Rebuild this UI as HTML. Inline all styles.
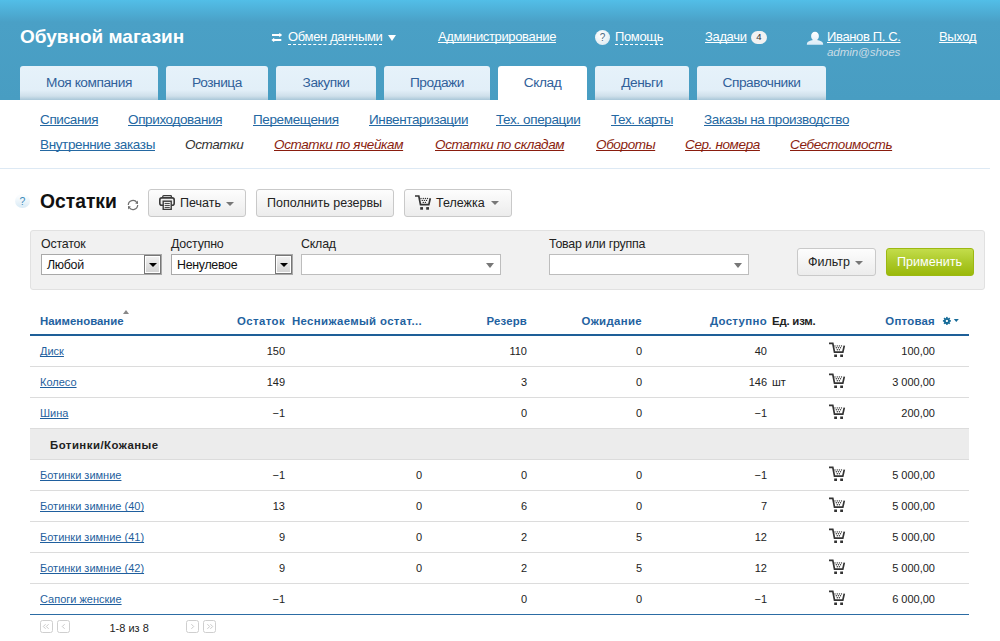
<!DOCTYPE html>
<html><head><meta charset="utf-8">
<style>
*{margin:0;padding:0;box-sizing:border-box}
*{text-decoration-skip-ink:none}
html,body{width:1000px;height:641px;overflow:hidden;background:#fff;font-family:"Liberation Sans",sans-serif;color:#222}
.abs{position:absolute;white-space:nowrap}
#hdr{position:absolute;left:0;top:0;width:1000px;height:100px;background:linear-gradient(#52bee7 0px,#4aa0c6 22px,#489dc2 100px)}
.logo{left:20px;top:26px;font-size:19px;font-weight:bold;color:#fff;line-height:22px}
.hl{color:#fff;font-size:13px;letter-spacing:-0.35px;line-height:16px;text-decoration:underline}
.dash{color:#fff;font-size:13px;letter-spacing:-0.35px;line-height:15px;border-bottom:1px dashed #fff}
.tab{position:absolute;top:66px;height:34px;border-radius:3px 3px 0 0;background:linear-gradient(#e6f2fa 0,#e2eff8 24px,#cfe0eb 30px,#a9c7d9 34px);color:#30609a;font-size:13.7px;letter-spacing:-0.45px;line-height:34px;text-align:center;padding-top:0}
.tab.act{background:#fff}
.sub{font-size:13.5px;letter-spacing:-0.37px;line-height:16px;color:#2468a2;text-decoration:underline}
.subi{font-size:13.5px;letter-spacing:-0.37px;line-height:16px;color:#8a1d0e;text-decoration:underline;font-style:italic}
.btn{position:absolute;height:28px;border:1px solid #c9c9c9;border-radius:3px;background:linear-gradient(#fdfdfd,#ececec);font-size:12.5px;color:#222;line-height:25px}
.caret{display:inline-block;width:0;height:0;border-left:4px solid transparent;border-right:4px solid transparent;border-top:4px solid #777;vertical-align:middle}
.lbl{font-size:12.4px;letter-spacing:-0.2px;color:#222;line-height:14px}
.sel{position:absolute;top:254px;height:21px;border:1px solid #a9a9a9;background:#fff;font-size:12.4px;letter-spacing:-0.3px;line-height:19px;padding-left:5px;padding-top:1px;color:#111}
.th{position:absolute;top:315px;font-size:11.4px;font-weight:bold;color:#1f62a0;line-height:13px;white-space:nowrap}
.td{position:absolute;font-size:11px;color:#222;line-height:13px;white-space:nowrap}
.lnk{color:#1f5f9e;text-decoration:underline}
.rowb{position:absolute;left:30px;width:939px;height:1px;background:#dcdcdc}
</style></head><body>
<div id="hdr"></div>
<div class="abs logo">Обувной магазин</div>

<!-- exchange icon -->
<svg class="abs" style="left:271px;top:32px" width="12" height="10" viewBox="0 0 12 10"><path d="M1 3H9M2.5 8H10.3" stroke="#fff" stroke-width="2"/><path d="M8.3 0.8L11.2 3 8.3 5.2zM3.2 5.8L0.4 8 3.2 10.2z" fill="#fff"/></svg>
<div class="abs dash" style="left:288px;top:29px;line-height:15px">Обмен данными</div>
<div class="abs" style="left:388px;top:35px;width:0;height:0;border-left:4.5px solid transparent;border-right:4.5px solid transparent;border-top:6px solid #fff"></div>
<div class="abs hl" style="left:438px;top:29px">Администрирование</div>
<div class="abs" style="left:595px;top:30px;width:15px;height:15px;border-radius:50%;background:radial-gradient(circle at 40% 35%,#fff,#d8e6ee);color:#4d6b82;font-size:10px;line-height:15px;text-align:center">?</div>
<div class="abs dash" style="left:615px;top:29px;line-height:15px">Помощь</div>
<div class="abs hl" style="left:705px;top:29px">Задачи</div>
<div class="abs" style="left:751px;top:31px;width:16px;height:13px;border-radius:7px;background:#f2f2f2;color:#333;font-size:9.5px;line-height:12px;text-align:center">4</div>
<svg class="abs" style="left:806px;top:31px" width="18" height="15" viewBox="0 0 18 15"><defs><linearGradient id="ug" x1="0" y1="0" x2="0" y2="1"><stop offset="0" stop-color="#ffffff"/><stop offset="1" stop-color="#d9ebf7"/></linearGradient></defs><path d="M9 0.7C11.2 0.7 12.9 2.4 12.9 5C12.9 7 12 8.4 10.9 9C14 9.4 16.6 10.6 17 12.3L17.2 13.8H0.8L1 12.3C1.4 10.6 4 9.4 7.1 9C6 8.4 5.1 7 5.1 5C5.1 2.4 6.8 0.7 9 0.7z" fill="url(#ug)"/></svg>
<div class="abs hl" style="left:827px;top:29px">Иванов П. С.</div>
<div class="abs" style="left:827px;top:45px;font-size:11.6px;letter-spacing:-0.1px;font-style:italic;color:#c9dce6;line-height:14px">admin@shoes</div>
<div class="abs hl" style="left:939px;top:29px">Выход</div>

<!-- tabs -->
<div class="tab" style="left:20px;width:138px">Моя компания</div>
<div class="tab" style="left:166px;width:102px">Розница</div>
<div class="tab" style="left:276px;width:100px">Закупки</div>
<div class="tab" style="left:384px;width:106px">Продажи</div>
<div class="tab act" style="left:498px;width:89px">Склад</div>
<div class="tab" style="left:595px;width:94px">Деньги</div>
<div class="tab" style="left:697px;width:129px">Справочники</div>

<!-- subnav -->
<div class="abs sub" style="left:40px;top:112px">Списания</div>
<div class="abs sub" style="left:128px;top:112px">Оприходования</div>
<div class="abs sub" style="left:253px;top:112px">Перемещения</div>
<div class="abs sub" style="left:369px;top:112px">Инвентаризации</div>
<div class="abs sub" style="left:496px;top:112px">Тех. операции</div>
<div class="abs sub" style="left:611px;top:112px">Тех. карты</div>
<div class="abs sub" style="left:704px;top:112px">Заказы на производство</div>
<div class="abs sub" style="left:40px;top:137px">Внутренние заказы</div>
<div class="abs subi" style="left:185px;top:137px;color:#333;text-decoration:none">Остатки</div>
<div class="abs subi" style="left:274px;top:137px">Остатки по ячейкам</div>
<div class="abs subi" style="left:435px;top:137px">Остатки по складам</div>
<div class="abs subi" style="left:596px;top:137px">Обороты</div>
<div class="abs subi" style="left:685px;top:137px">Сер. номера</div>
<div class="abs subi" style="left:790px;top:137px">Себестоимость</div>
<div class="abs" style="left:0;top:168px;width:990px;height:1px;background:#dde9f4"></div>

<!-- title -->
<div class="abs" style="left:15px;top:194px;width:15px;height:14px;border-radius:50%;background:linear-gradient(#f9fcfe 20%,#d8eaf5);color:#3d8bbb;font-size:10.5px;line-height:14px;text-align:center">?</div>
<div class="abs" style="left:40px;top:190px;font-size:19.3px;font-weight:bold;color:#111;line-height:24px">Остатки</div>
<svg class="abs" style="left:127px;top:199px" width="12" height="12" viewBox="0 0 12 12"><path d="M1.3 6A4.7 4.7 0 0 1 9.9 3.6" stroke="#707070" stroke-width="1.2" fill="none"/><path d="M8.2 4.4L11 5 11 1.6z" fill="#707070"/><path d="M10.7 6A4.7 4.7 0 0 1 2.1 8.4" stroke="#707070" stroke-width="1.2" fill="none"/><path d="M3.8 7.6L1 7 1 10.4z" fill="#707070"/></svg>

<div class="btn" style="left:148px;top:189px;width:98px"></div>
<svg class="abs" style="left:159px;top:195px" width="16" height="15" viewBox="0 0 16 15"><rect x="3.8" y="0.7" width="8.6" height="2.2" rx="0.8" fill="#f4f4f4" stroke="#3a3a3a" stroke-width="1.3"/><rect x="0.8" y="2.9" width="14.4" height="7.4" rx="2" fill="#eee" stroke="#3a3a3a" stroke-width="1.6"/><rect x="4.2" y="6.2" width="8" height="8.2" fill="#fff" stroke="#3a3a3a" stroke-width="1.4"/><path d="M5.6 8.4h5.2M5.6 10.4h5.2M5.6 12.4h5.2" stroke="#3a3a3a" stroke-width="1"/></svg>
<div class="abs" style="left:180px;top:196px;font-size:12.5px;line-height:15px;color:#222">Печать</div>
<div class="abs caret" style="left:226px;top:202px"></div>
<div class="btn" style="left:256px;top:189px;width:138px"></div>
<div class="abs" style="left:267px;top:196px;font-size:12.5px;line-height:15px;color:#222">Пополнить резервы</div>
<div class="btn" style="left:404px;top:189px;width:108px"></div>
<svg class="abs" style="left:414px;top:194px" width="18" height="16" viewBox="0 0 18 16"><path d="M1 2H4.8L6.5 10.7H14.8L16.3 4.2" stroke="#333" stroke-width="1.7" fill="none"/><g fill="#333"><circle cx="7" cy="4.5" r="0.7"/><circle cx="9.3" cy="4.5" r="0.7"/><circle cx="11.4" cy="4.5" r="0.7"/><circle cx="13.5" cy="4.5" r="0.7"/><circle cx="8.3" cy="6.4" r="0.7"/><circle cx="10.4" cy="6.4" r="0.7"/><circle cx="12.5" cy="6.4" r="0.7"/><circle cx="9.3" cy="8.4" r="0.7"/><circle cx="11.4" cy="8.4" r="0.7"/><rect x="6.2" y="13.1" width="2.8" height="2.6"/><rect x="12.2" y="13.1" width="2.8" height="2.6"/></g></svg>
<div class="abs" style="left:436px;top:196px;font-size:12.5px;line-height:15px;color:#222">Тележка</div>
<div class="abs caret" style="left:491px;top:201px"></div>

<!-- filter panel -->
<div class="abs" style="left:30px;top:230px;width:955px;height:60px;border:1px solid #e1e1e1;border-radius:3px;background:#f1f1f1"></div>
<div class="abs lbl" style="left:41px;top:237px">Остаток</div>
<div class="abs lbl" style="left:171px;top:237px">Доступно</div>
<div class="abs lbl" style="left:301px;top:237px">Склад</div>
<div class="abs lbl" style="left:549px;top:237px">Товар или группа</div>
<div class="sel" style="left:41px;width:121px">Любой<div style="position:absolute;right:0;top:0;width:17px;height:19px;border:1px solid #777;box-shadow:inset 0 0 0 1px #fff;background:linear-gradient(#f2f2f2,#d2d2d2)"><div style="position:absolute;left:3.5px;top:7px;border-left:4px solid transparent;border-right:4px solid transparent;border-top:4.5px solid #000"></div></div></div>
<div class="sel" style="left:171px;width:122px">Ненулевое<div style="position:absolute;right:0;top:0;width:17px;height:19px;border:1px solid #777;box-shadow:inset 0 0 0 1px #fff;background:linear-gradient(#f2f2f2,#d2d2d2)"><div style="position:absolute;left:3.5px;top:7px;border-left:4px solid transparent;border-right:4px solid transparent;border-top:4.5px solid #000"></div></div></div>
<div class="sel" style="left:301px;width:200px;border-color:#bdbdbd"><div style="position:absolute;right:6px;top:8px;border-left:4.5px solid transparent;border-right:4.5px solid transparent;border-top:5px solid #777"></div></div>
<div class="sel" style="left:549px;width:200px;border-color:#bdbdbd"><div style="position:absolute;right:6px;top:8px;border-left:4.5px solid transparent;border-right:4.5px solid transparent;border-top:5px solid #777"></div></div>
<div class="btn" style="left:797px;top:248px;width:79px;height:28px;line-height:26px"></div>
<div class="abs" style="left:808px;top:255px;font-size:12.5px;line-height:14px;color:#222">Фильтр</div>
<div class="abs caret" style="left:855px;top:261px"></div>
<div class="abs" style="left:886px;top:248px;width:88px;height:28px;border:1px solid #9cb812;border-radius:3px;background:linear-gradient(#c3dd4a,#acc92a 50%,#9bb90a)"></div>
<div class="abs" style="left:897px;top:255px;font-size:12.6px;line-height:14px;color:#fff">Применить</div>

<div class="th" style="left:40px">Наименование</div>
<div class="abs" style="left:123px;top:310px;border-left:3px solid transparent;border-right:3px solid transparent;border-bottom:4px solid #888"></div>
<div class="th" style="right:715px;letter-spacing:0.41px">Остаток</div>
<div class="th" style="right:578px;letter-spacing:0.36px">Неснижаемый остат...</div>
<div class="th" style="right:473px;letter-spacing:0.17px">Резерв</div>
<div class="th" style="right:358px;letter-spacing:0.35px">Ожидание</div>
<div class="th" style="right:233px;letter-spacing:0.35px">Доступно</div>
<div class="th" style="left:772px;color:#222;letter-spacing:-0.2px">Ед. изм.</div>
<div class="th" style="right:65px;letter-spacing:0.25px">Оптовая</div>
<svg class="abs" style="left:942px;top:316px" width="18" height="10" viewBox="0 0 18 10"><g fill="#166b98"><path fill-rule="evenodd" d="M4.9 1.9A3 3 0 1 1 4.89 1.9zM4.9 3.8A1.1 1.1 0 1 0 4.91 3.8z"/><rect x="4.1" y="0.9" width="1.6" height="2" transform="rotate(0 4.9 4.9)"/><rect x="4.1" y="0.9" width="1.6" height="2" transform="rotate(45 4.9 4.9)"/><rect x="4.1" y="0.9" width="1.6" height="2" transform="rotate(90 4.9 4.9)"/><rect x="4.1" y="0.9" width="1.6" height="2" transform="rotate(135 4.9 4.9)"/><rect x="4.1" y="0.9" width="1.6" height="2" transform="rotate(180 4.9 4.9)"/><rect x="4.1" y="0.9" width="1.6" height="2" transform="rotate(225 4.9 4.9)"/><rect x="4.1" y="0.9" width="1.6" height="2" transform="rotate(270 4.9 4.9)"/><rect x="4.1" y="0.9" width="1.6" height="2" transform="rotate(315 4.9 4.9)"/><path d="M11.8 3h5l-2.5 3z"/></g></svg>
<div class="abs" style="left:30px;top:334px;width:939px;height:2px;background:#1e5f98"></div>
<div class="td lnk" style="left:40px;top:345px">Диск</div>
<div class="td" style="right:715px;top:345px">150</div>
<div class="td" style="right:473px;top:345px">110</div>
<div class="td" style="right:358px;top:345px">0</div>
<div class="td" style="right:233px;top:345px">40</div>
<svg class="abs" style="left:828px;top:341px" width="18" height="16" viewBox="0 -0.4 18 16"><path d="M1 2H4.8L6.5 10.7H14.8L16.3 4.2" stroke="#333" stroke-width="1.7" fill="none"/><g fill="#333"><circle cx="7" cy="4.5" r="0.7"/><circle cx="9.3" cy="4.5" r="0.7"/><circle cx="11.4" cy="4.5" r="0.7"/><circle cx="13.5" cy="4.5" r="0.7"/><circle cx="8.3" cy="6.4" r="0.7"/><circle cx="10.4" cy="6.4" r="0.7"/><circle cx="12.5" cy="6.4" r="0.7"/><circle cx="9.3" cy="8.4" r="0.7"/><circle cx="11.4" cy="8.4" r="0.7"/><rect x="6.2" y="13.1" width="2.8" height="2.6"/><rect x="12.2" y="13.1" width="2.8" height="2.6"/></g></svg>
<div class="td" style="right:65px;top:345px">100,00</div>
<div class="rowb" style="top:366px"></div>
<div class="td lnk" style="left:40px;top:376px">Колесо</div>
<div class="td" style="right:715px;top:376px">149</div>
<div class="td" style="right:473px;top:376px">3</div>
<div class="td" style="right:358px;top:376px">0</div>
<div class="td" style="right:233px;top:376px">146</div>
<div class="td" style="left:772px;top:376px">шт</div>
<svg class="abs" style="left:828px;top:372px" width="18" height="16" viewBox="0 -0.4 18 16"><path d="M1 2H4.8L6.5 10.7H14.8L16.3 4.2" stroke="#333" stroke-width="1.7" fill="none"/><g fill="#333"><circle cx="7" cy="4.5" r="0.7"/><circle cx="9.3" cy="4.5" r="0.7"/><circle cx="11.4" cy="4.5" r="0.7"/><circle cx="13.5" cy="4.5" r="0.7"/><circle cx="8.3" cy="6.4" r="0.7"/><circle cx="10.4" cy="6.4" r="0.7"/><circle cx="12.5" cy="6.4" r="0.7"/><circle cx="9.3" cy="8.4" r="0.7"/><circle cx="11.4" cy="8.4" r="0.7"/><rect x="6.2" y="13.1" width="2.8" height="2.6"/><rect x="12.2" y="13.1" width="2.8" height="2.6"/></g></svg>
<div class="td" style="right:65px;top:376px">3 000,00</div>
<div class="rowb" style="top:397px"></div>
<div class="td lnk" style="left:40px;top:407px">Шина</div>
<div class="td" style="right:715px;top:407px">−1</div>
<div class="td" style="right:473px;top:407px">0</div>
<div class="td" style="right:358px;top:407px">0</div>
<div class="td" style="right:233px;top:407px">−1</div>
<svg class="abs" style="left:828px;top:403px" width="18" height="16" viewBox="0 -0.4 18 16"><path d="M1 2H4.8L6.5 10.7H14.8L16.3 4.2" stroke="#333" stroke-width="1.7" fill="none"/><g fill="#333"><circle cx="7" cy="4.5" r="0.7"/><circle cx="9.3" cy="4.5" r="0.7"/><circle cx="11.4" cy="4.5" r="0.7"/><circle cx="13.5" cy="4.5" r="0.7"/><circle cx="8.3" cy="6.4" r="0.7"/><circle cx="10.4" cy="6.4" r="0.7"/><circle cx="12.5" cy="6.4" r="0.7"/><circle cx="9.3" cy="8.4" r="0.7"/><circle cx="11.4" cy="8.4" r="0.7"/><rect x="6.2" y="13.1" width="2.8" height="2.6"/><rect x="12.2" y="13.1" width="2.8" height="2.6"/></g></svg>
<div class="td" style="right:65px;top:407px">200,00</div>
<div class="rowb" style="top:428px"></div>
<div class="abs" style="left:30px;top:429px;width:939px;height:31px;background:#ececec"></div>
<div class="td" style="left:50px;top:437px;font-weight:bold;font-size:11.4px;letter-spacing:0.48px;color:#222;margin-top:1.5px">Ботинки/Кожаные</div>
<div class="rowb" style="top:459px"></div>
<div class="td lnk" style="left:40px;top:469px">Ботинки зимние</div>
<div class="td" style="right:715px;top:469px">−1</div>
<div class="td" style="right:578px;top:469px">0</div>
<div class="td" style="right:473px;top:469px">0</div>
<div class="td" style="right:358px;top:469px">0</div>
<div class="td" style="right:233px;top:469px">−1</div>
<svg class="abs" style="left:828px;top:465px" width="18" height="16" viewBox="0 -0.4 18 16"><path d="M1 2H4.8L6.5 10.7H14.8L16.3 4.2" stroke="#333" stroke-width="1.7" fill="none"/><g fill="#333"><circle cx="7" cy="4.5" r="0.7"/><circle cx="9.3" cy="4.5" r="0.7"/><circle cx="11.4" cy="4.5" r="0.7"/><circle cx="13.5" cy="4.5" r="0.7"/><circle cx="8.3" cy="6.4" r="0.7"/><circle cx="10.4" cy="6.4" r="0.7"/><circle cx="12.5" cy="6.4" r="0.7"/><circle cx="9.3" cy="8.4" r="0.7"/><circle cx="11.4" cy="8.4" r="0.7"/><rect x="6.2" y="13.1" width="2.8" height="2.6"/><rect x="12.2" y="13.1" width="2.8" height="2.6"/></g></svg>
<div class="td" style="right:65px;top:469px">5 000,00</div>
<div class="rowb" style="top:490px"></div>
<div class="td lnk" style="left:40px;top:500px">Ботинки зимние (40)</div>
<div class="td" style="right:715px;top:500px">13</div>
<div class="td" style="right:578px;top:500px">0</div>
<div class="td" style="right:473px;top:500px">6</div>
<div class="td" style="right:358px;top:500px">0</div>
<div class="td" style="right:233px;top:500px">7</div>
<svg class="abs" style="left:828px;top:496px" width="18" height="16" viewBox="0 -0.4 18 16"><path d="M1 2H4.8L6.5 10.7H14.8L16.3 4.2" stroke="#333" stroke-width="1.7" fill="none"/><g fill="#333"><circle cx="7" cy="4.5" r="0.7"/><circle cx="9.3" cy="4.5" r="0.7"/><circle cx="11.4" cy="4.5" r="0.7"/><circle cx="13.5" cy="4.5" r="0.7"/><circle cx="8.3" cy="6.4" r="0.7"/><circle cx="10.4" cy="6.4" r="0.7"/><circle cx="12.5" cy="6.4" r="0.7"/><circle cx="9.3" cy="8.4" r="0.7"/><circle cx="11.4" cy="8.4" r="0.7"/><rect x="6.2" y="13.1" width="2.8" height="2.6"/><rect x="12.2" y="13.1" width="2.8" height="2.6"/></g></svg>
<div class="td" style="right:65px;top:500px">5 000,00</div>
<div class="rowb" style="top:521px"></div>
<div class="td lnk" style="left:40px;top:531px">Ботинки зимние (41)</div>
<div class="td" style="right:715px;top:531px">9</div>
<div class="td" style="right:578px;top:531px">0</div>
<div class="td" style="right:473px;top:531px">2</div>
<div class="td" style="right:358px;top:531px">5</div>
<div class="td" style="right:233px;top:531px">12</div>
<svg class="abs" style="left:828px;top:527px" width="18" height="16" viewBox="0 -0.4 18 16"><path d="M1 2H4.8L6.5 10.7H14.8L16.3 4.2" stroke="#333" stroke-width="1.7" fill="none"/><g fill="#333"><circle cx="7" cy="4.5" r="0.7"/><circle cx="9.3" cy="4.5" r="0.7"/><circle cx="11.4" cy="4.5" r="0.7"/><circle cx="13.5" cy="4.5" r="0.7"/><circle cx="8.3" cy="6.4" r="0.7"/><circle cx="10.4" cy="6.4" r="0.7"/><circle cx="12.5" cy="6.4" r="0.7"/><circle cx="9.3" cy="8.4" r="0.7"/><circle cx="11.4" cy="8.4" r="0.7"/><rect x="6.2" y="13.1" width="2.8" height="2.6"/><rect x="12.2" y="13.1" width="2.8" height="2.6"/></g></svg>
<div class="td" style="right:65px;top:531px">5 000,00</div>
<div class="rowb" style="top:552px"></div>
<div class="td lnk" style="left:40px;top:562px">Ботинки зимние (42)</div>
<div class="td" style="right:715px;top:562px">9</div>
<div class="td" style="right:578px;top:562px">0</div>
<div class="td" style="right:473px;top:562px">2</div>
<div class="td" style="right:358px;top:562px">5</div>
<div class="td" style="right:233px;top:562px">12</div>
<svg class="abs" style="left:828px;top:558px" width="18" height="16" viewBox="0 -0.4 18 16"><path d="M1 2H4.8L6.5 10.7H14.8L16.3 4.2" stroke="#333" stroke-width="1.7" fill="none"/><g fill="#333"><circle cx="7" cy="4.5" r="0.7"/><circle cx="9.3" cy="4.5" r="0.7"/><circle cx="11.4" cy="4.5" r="0.7"/><circle cx="13.5" cy="4.5" r="0.7"/><circle cx="8.3" cy="6.4" r="0.7"/><circle cx="10.4" cy="6.4" r="0.7"/><circle cx="12.5" cy="6.4" r="0.7"/><circle cx="9.3" cy="8.4" r="0.7"/><circle cx="11.4" cy="8.4" r="0.7"/><rect x="6.2" y="13.1" width="2.8" height="2.6"/><rect x="12.2" y="13.1" width="2.8" height="2.6"/></g></svg>
<div class="td" style="right:65px;top:562px">5 000,00</div>
<div class="rowb" style="top:583px"></div>
<div class="td lnk" style="left:40px;top:593px">Сапоги женские</div>
<div class="td" style="right:715px;top:593px">−1</div>
<div class="td" style="right:473px;top:593px">0</div>
<div class="td" style="right:358px;top:593px">0</div>
<div class="td" style="right:233px;top:593px">−1</div>
<svg class="abs" style="left:828px;top:589px" width="18" height="16" viewBox="0 -0.4 18 16"><path d="M1 2H4.8L6.5 10.7H14.8L16.3 4.2" stroke="#333" stroke-width="1.7" fill="none"/><g fill="#333"><circle cx="7" cy="4.5" r="0.7"/><circle cx="9.3" cy="4.5" r="0.7"/><circle cx="11.4" cy="4.5" r="0.7"/><circle cx="13.5" cy="4.5" r="0.7"/><circle cx="8.3" cy="6.4" r="0.7"/><circle cx="10.4" cy="6.4" r="0.7"/><circle cx="12.5" cy="6.4" r="0.7"/><circle cx="9.3" cy="8.4" r="0.7"/><circle cx="11.4" cy="8.4" r="0.7"/><rect x="6.2" y="13.1" width="2.8" height="2.6"/><rect x="12.2" y="13.1" width="2.8" height="2.6"/></g></svg>
<div class="td" style="right:65px;top:593px">6 000,00</div>
<div class="abs" style="left:30px;top:614px;width:939px;height:1px;background:#2c6ca4"></div>
<svg class="abs" style="left:40px;top:620px" width="180" height="14" viewBox="0 0 180 14"><g fill="none" stroke="#cfcfcf" stroke-width="1"><rect x="0.5" y="0.5" width="12" height="12" rx="2"/><rect x="17.5" y="0.5" width="12" height="12" rx="2"/><rect x="146.5" y="0.5" width="12" height="12" rx="2"/><rect x="163.5" y="0.5" width="12" height="12" rx="2"/></g><g fill="none" stroke="#c2c2c2" stroke-width="0.9"><path d="M5.6 4.2L3.3 6.5 5.6 8.8M8.6 4.2L6.3 6.5 8.6 8.8"/><path d="M24.6 4.2L22.3 6.5 24.6 8.8"/><path d="M151.4 4.2L153.7 6.5 151.4 8.8"/><path d="M167.4 4.2L169.7 6.5 167.4 8.8M170.4 4.2L172.7 6.5 170.4 8.8"/></g></svg>
<div class="abs" style="left:109.5px;top:621px;font-size:11px;line-height:14px;color:#222">1-8 из 8</div>
</body></html>
